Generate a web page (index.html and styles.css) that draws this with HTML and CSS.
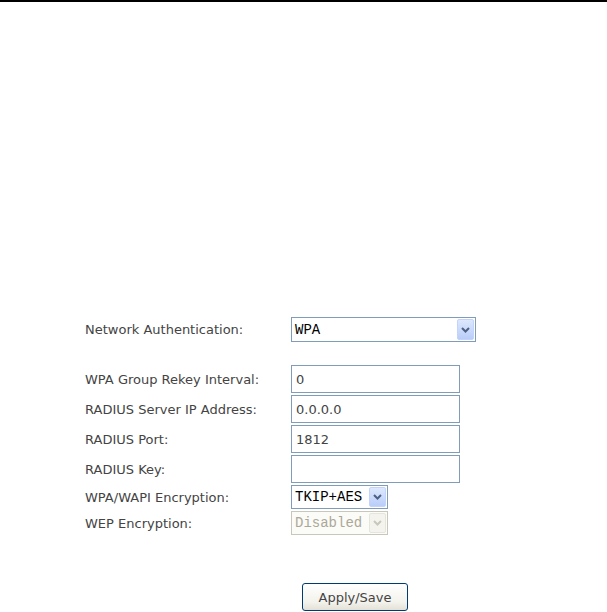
FILE: index.html
```html
<!DOCTYPE html>
<html lang="en">
<head>
  <meta charset="UTF-8" />
  <title>Wireless Security</title>
  <link rel="stylesheet" href="styles.css">
</head>
<body>

  <div class="top-rule"></div>

  <div class="security-form">
    <div class="row row-auth">
      <label class="field-label">Network Authentication:</label>
      <div class="select select-wide">
        <span class="select-value">WPA</span>
        <span class="select-arrow">
          <svg width="9" height="6" viewBox="0 0 9 6"><path d="M1 1 L4.5 4.5 L8 1" fill="none" stroke="#4d6185" stroke-width="2"/></svg>
        </span>
      </div>
    </div>

    <div class="fields">
      <label class="field-label">WPA Group Rekey Interval:</label>
      <div class="input">0</div>

      <label class="field-label">RADIUS Server IP Address:</label>
      <div class="input">0.0.0.0</div>

      <label class="field-label">RADIUS Port:</label>
      <div class="input">1812</div>

      <label class="field-label">RADIUS Key:</label>
      <div class="input"></div>

      <label class="field-label">WPA/WAPI Encryption:</label>
      <div class="select select-small">
        <span class="select-value">TKIP+AES</span>
        <span class="select-arrow">
          <svg width="9" height="6" viewBox="0 0 9 6"><path d="M1 1 L4.5 4.5 L8 1" fill="none" stroke="#4d6185" stroke-width="2"/></svg>
        </span>
      </div>

      <label class="field-label">WEP Encryption:</label>
      <div class="select select-small disabled">
        <span class="select-value">Disabled</span>
        <span class="select-arrow">
          <svg width="9" height="6" viewBox="0 0 9 6"><path d="M1 1 L4.5 4.5 L8 1" fill="none" stroke="#c9c7ba" stroke-width="2"/></svg>
        </span>
      </div>
    </div>

    <div class="actions">
      <button class="apply-btn">Apply/Save</button>
    </div>
  </div>

</body>
</html>
```

FILE: styles.css
```css
* {
  box-sizing: border-box;
  margin: 0;
  padding: 0;
}

body {
  font-family: 'DejaVu Sans', sans-serif;
  font-size: 13px;
  color: #444;
  background: #fff;
}

.top-rule {
  height: 2px;
  background: #000;
}

.security-form {
  padding-top: 315px;
  padding-left: 85px;
}

.row {
  display: flex;
  align-items: center;
}

.field-label {
  width: 206px;
  flex-shrink: 0;
}

.row-auth {
  margin-bottom: 23px;
}

.fields {
  display: grid;
  grid-template-columns: 206px auto;
  row-gap: 2px;
  align-items: center;
}

.input {
  width: 169px;
  height: 28px;
  border: 1px solid #7f9db9;
  padding: 0 4px;
  display: flex;
  align-items: center;
  font-size: 13px;
  color: #444;
}

.select {
  display: flex;
  align-items: stretch;
  border: 1px solid #7f9db9;
  background: #fff;
  padding: 1px;
  font-family: 'Liberation Mono', monospace;
  font-size: 14px;
  color: #000;
}

.select-wide {
  width: 185px;
  height: 25px;
}

.select-small {
  width: 97px;
  height: 24px;
}

.select-value {
  flex: 1;
  display: flex;
  align-items: center;
  padding-left: 2px;
}

.select-arrow {
  width: 17px;
  display: flex;
  align-items: center;
  justify-content: center;
  background: linear-gradient(#dde8fd, #b9cdf8);
  border: 1px solid #c3d3fd;
  border-radius: 2px;
}

.select.disabled {
  border-color: #c9c7ba;
  background: #fbfbf8;
  color: #aca899;
}

.select.disabled .select-arrow {
  background: #f4f3ee;
  border-color: #e6e5dc;
}

.actions {
  margin-top: 48px;
  padding-left: 217px;
}

.apply-btn {
  width: 106px;
  height: 28px;
  border: 1px solid #003c74;
  border-radius: 3px;
  background: linear-gradient(#ffffff, #f3f2ec 70%, #e3e1d6);
  font-family: 'DejaVu Sans', sans-serif;
  font-size: 13px;
  color: #444;
}
```
